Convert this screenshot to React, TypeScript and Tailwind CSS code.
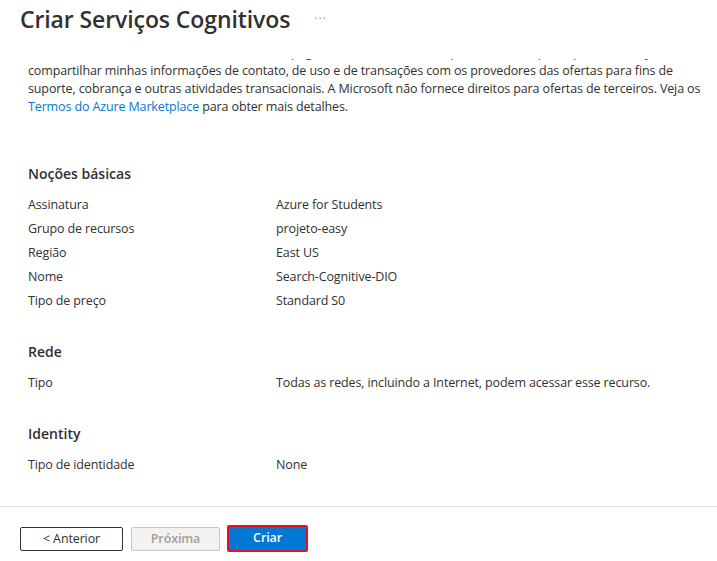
import * as React from 'react';

const basics: [string, string][] = [
    ['Assinatura', 'Azure for Students'],
    ['Grupo de recursos', 'projeto-easy'],
    ['Região', 'East US'],
    ['Nome', 'Search-Cognitive-DIO'],
    ['Tipo de preço', 'Standard S0'],
];

const Row: React.FC<{ label: string; value: string }> = ({ label, value }) => (
    <div className="flex h-6 items-center">
        <div className="w-[248px] shrink-0 text-[#323130]">{label}</div>
        <div className="text-[#323130] whitespace-nowrap">{value}</div>
    </div>
);

const Section: React.FC<{ title: string; rows: [string, string][]; className?: string }> = ({ title, rows, className }) => (
    <section className={className}>
        <h3 className="h-5 leading-5 text-[14px] tracking-normal font-semibold text-[#323130] mb-[9px]">{title}</h3>
        {rows.map(([l, v]) => <Row key={l} label={l} value={v} />)}
    </section>
);

export default function App() {
    return (
        <div
            className="w-[717px] h-[561px] bg-white flex flex-col overflow-hidden text-[12.5px] tracking-[-0.13px] text-[#323130]"
            style={{ fontFamily: '"Open Sans", "Noto Sans", sans-serif' }}
        >
            <header className="h-[59px] shrink-0 flex items-start pt-[3px] px-5 gap-[24px]">
                <h1 className="text-[23px] leading-8 font-semibold text-[#323130] tracking-[-0.1px]">Criar Serviços Cognitivos</h1>
                <span className="text-[#a19f9d] text-[12px] leading-8 tracking-[1px]">···</span>
            </header>

            <div className="flex-1 overflow-hidden flex flex-col">
                <div className="px-7">
                    <div className="mt-[-15px] leading-[18px] whitespace-nowrap">
                        <div>Microsoft a cobrar ou faturar meu método de pagamento; e (c) concordo que a Microsoft pode, para isso, hoje,</div>
                        <div>compartilhar minhas informações de contato, de uso e de transações com os provedores das ofertas para fins de</div>
                        <div>suporte, cobrança e outras atividades transacionais. A Microsoft não fornece direitos para ofertas de terceiros. Veja os</div>
                        <div>
                            <a className="text-[#0078d4]">Termos do Azure Marketplace</a> para obter mais detalhes.
                        </div>
                    </div>

                    <Section title="Noções básicas" rows={basics} className="mt-[48px]" />
                    <Section
                        title="Rede"
                        rows={[['Tipo', 'Todas as redes, incluindo a Internet, podem acessar esse recurso.']]}
                        className="mt-[29px]"
                    />
                    <Section title="Identity" rows={[['Tipo de identidade', 'None']]} className="mt-[29px]" />
                </div>
            </div>

            <footer className="h-[55px] shrink-0 border-t border-[#e1dfdd] px-5 pt-5 flex items-start gap-2">
                <button className="w-[103px] h-6 border border-[#323130] rounded-[2px] bg-white text-[#323130] leading-none">
                    &lt; Anterior
                </button>
                <button className="w-[89px] h-6 border border-[#c8c6c4] rounded-[2px] bg-[#f3f2f1] text-[#a19f9d] leading-none font-semibold">
                    Próxima
                </button>
                <div className="-mt-[2px] -ml-px border-2 border-[#e81123] rounded-[2px]">
                    <button className="w-[77px] h-[23px] bg-[#0078d4] text-white font-semibold leading-none block">
                        Criar
                    </button>
                </div>
            </footer>
        </div>
    );
}
